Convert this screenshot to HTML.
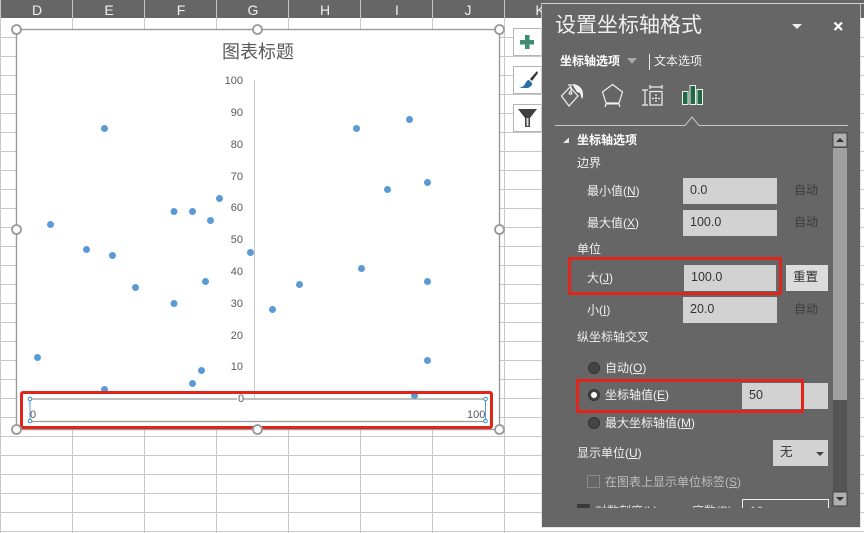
<!DOCTYPE html>
<html><head><meta charset="utf-8">
<style>
html,body{margin:0;padding:0;background:#fff}
#r{position:relative;width:864px;height:533px;overflow:hidden;font-family:"Liberation Sans","Noto Sans CJK SC",sans-serif;background:#fff}
svg{position:absolute;left:0;top:0}
.t{position:absolute;white-space:nowrap;font-size:12px;line-height:16px;color:#f0f0f0}
.u{text-decoration:underline}
.d{color:#bdbdbd}
.a{color:#3c3c3c}
.b{position:absolute;background:#d2d2d2;color:#333;font-size:12.500px;line-height:24px;box-sizing:border-box;padding-left:7px;height:26px}
.rd{position:absolute;width:12px;height:12px;border-radius:50%;background:#444;border:1px solid #333;box-sizing:border-box}
</style></head><body><div id="r">
<svg width="864" height="533" viewBox="0 0 864 533" font-family="Liberation Sans, Noto Sans CJK SC, sans-serif">
<g stroke="#c8c8c8" stroke-width="1" shape-rendering="crispEdges">
<path d="M0 37.500H864M0 56.500H864M0 75.500H864M0 94.500H864M0 113.500H864M0 132.500H864M0 151.500H864M0 170.500H864M0 189.500H864M0 208.500H864M0 227.500H864M0 246.500H864M0 265.500H864M0 284.500H864M0 303.500H864M0 322.500H864M0 341.500H864M0 360.500H864M0 379.500H864M0 398.500H864M0 417.500H864M0 436.500H864M0 455.500H864M0 474.500H864M0 493.500H864M0 512.500H864M0 531.500H864"/>
<path d="M0.500 18V533M72.500 18V533M144.500 18V533M216.500 18V533M288.500 18V533M360.500 18V533M432.500 18V533M504.500 18V533"/>
</g>
<rect x="0" y="0" width="864" height="18" fill="#666"/>
<g stroke="#c4c4c4" shape-rendering="crispEdges"><path d="M0.500 0V18M72.500 0V18M144.500 0V18M216.500 0V18M288.500 0V18M360.500 0V18M432.500 0V18M504.500 0V18"/></g>
<g fill="#f0f0f0" font-size="14" text-anchor="middle"><text x="37" y="15">D</text><text x="109" y="15">E</text><text x="181" y="15">F</text><text x="253" y="15">G</text><text x="325" y="15">H</text><text x="397" y="15">I</text><text x="468" y="15">J</text><text x="540" y="15">K</text></g>
<rect x="16.500" y="29.500" width="483" height="400" fill="#fff" stroke="#9a9a9a" stroke-width="1.400"/>
<text x="258" y="58" text-anchor="middle" font-size="18" fill="#595959">图表标题</text>
<path d="M254.500 80V399" stroke="#c8c8c8" fill="none"/>
<g fill="#595959" font-size="11" text-anchor="end">
<text x="243" y="84">100</text><text x="243" y="116">90</text><text x="243" y="148">80</text><text x="243" y="180">70</text><text x="243" y="211">60</text><text x="243" y="243">50</text><text x="243" y="275">40</text><text x="243" y="307">30</text><text x="243" y="339">20</text><text x="243" y="370">10</text>
</g>
<g fill="#5b9bd5">
<circle cx="104.500" cy="128.500" r="3.500"/><circle cx="50.500" cy="224.500" r="3.500"/><circle cx="86.500" cy="249.500" r="3.500"/><circle cx="112.500" cy="255.500" r="3.500"/><circle cx="135.500" cy="287.500" r="3.500"/><circle cx="174" cy="303.500" r="3.500"/><circle cx="174" cy="211.500" r="3.500"/><circle cx="192.500" cy="211.500" r="3.500"/><circle cx="210.500" cy="220.500" r="3.500"/><circle cx="219.500" cy="198.500" r="3.500"/><circle cx="250.500" cy="252.500" r="3.500"/><circle cx="205.500" cy="281.500" r="3.500"/><circle cx="37.500" cy="357.500" r="3.500"/><circle cx="201.500" cy="370.500" r="3.500"/><circle cx="192.500" cy="383.500" r="3.500"/><circle cx="104.500" cy="389.500" r="3.500"/><circle cx="272.500" cy="309.500" r="3.500"/><circle cx="299.500" cy="284.500" r="3.500"/><circle cx="356.500" cy="128.500" r="3.500"/><circle cx="409.500" cy="119.500" r="3.500"/><circle cx="387.500" cy="189.500" r="3.500"/><circle cx="427.500" cy="182.500" r="3.500"/><circle cx="361.500" cy="268.500" r="3.500"/><circle cx="427.500" cy="281.500" r="3.500"/><circle cx="427.500" cy="360.500" r="3.500"/><circle cx="414.500" cy="395.500" r="3.500"/>
</g>
<path d="M30 399H237M244 399H486M30 421.500H486" stroke="#9a9a9a" stroke-width="1.200" fill="none"/>
<path d="M30 399V421M485.500 399V421" stroke="#5b9bd5" fill="none"/>
<text x="238" y="402" font-size="11" fill="#595959">0</text>
<text x="30" y="418" font-size="11" fill="#595959">0</text>
<text x="467" y="418" font-size="11" fill="#595959">100</text>
<g fill="#fff" stroke="#2e8fd0" stroke-width="1"><circle cx="30" cy="399" r="1.800"/><circle cx="30" cy="421" r="1.800"/><circle cx="485.500" cy="399" r="1.800"/><circle cx="485.500" cy="421" r="1.800"/></g>
<rect x="21.500" y="392.500" width="470" height="35" rx="1.500" fill="none" stroke="#e1251b" stroke-width="3"/>
<g fill="#fff" stroke="#999" stroke-width="1.800"><circle cx="16.500" cy="29.500" r="4.500"/><circle cx="257.500" cy="29.500" r="4.500"/><circle cx="499.500" cy="29.500" r="4.500"/><circle cx="16.500" cy="229.500" r="4.500"/><circle cx="499.500" cy="229.500" r="4.500"/><circle cx="16.500" cy="429.500" r="4.500"/><circle cx="257.500" cy="429.500" r="4.500"/><circle cx="499.500" cy="429.500" r="4.500"/></g>
<g fill="#fff" stroke="#b4b4b4"><rect x="513.500" y="28.500" width="28" height="27"/><rect x="513.500" y="66.500" width="28" height="27"/><rect x="513.500" y="104.500" width="28" height="27"/></g>
<path d="M525 35h4.500v5h4.500v4.500h-4.500v4.500h-4.500v-4.500h-5v-4.500h5z" fill="#3f8b74"/>
<path d="M537 71L530 79l2 2 6-8z" fill="#333"/><path d="M529 80c-2 0-3 2-4 4-1 2-3 3-6 4h9c2-1 5-3 4-5z" fill="#2e6ea6"/>
<path d="M518 109H537L530 118V127H525V118Z" fill="#404040"/><path d="M526.500 118H528.500V126H526.500Z" fill="#ddd"/>
<rect x="542" y="3" width="318" height="524" fill="#666"/>
<path d="M541.500 3V527.500H860.500V3" stroke="#dcdcdc" stroke-width="1" fill="none" opacity=".7"/>
<path d="M541.500 3.500H864" stroke="#d0d0d0" fill="none"/>
<path d="M792 24h10l-5 5z" fill="#f0f0f0"/>
<path d="M834.500 22.500l7.500 7.500M842 22.500l-7.500 7.500" stroke="#fff" stroke-width="2.200" fill="none"/>
<path d="M627 58h10l-5 6z" fill="#a8a8a8"/>
<path d="M649.500 54V70" stroke="#e8e8e8" fill="none"/>
<g fill="none" stroke="#f0f0f0" stroke-width="1.200">
<path d="M561.500 96L570 87L578 96L569 106Z"/><path d="M568 85h3v7"/><circle cx="570.500" cy="93" r="1.300"/>
<path d="M572 84c6 0 11 4 11 10 0 2 0 4-1 5l-2-6-3-1z" fill="#f0f0f0" stroke="none"/>
<path d="M612.500 84.500L622.500 92L619 103H606L602.500 92Z"/><path d="M606 103.500H619" stroke-width="2"/><path d="M606 104l-1 3M619 104l1 3"/>
<path d="M650 87H662M650 85V89M662 85V89M642 90H648M642 105H648M645 90V105M650 91.500H662V105H650Z"/>
<path d="M656 94V103M652 98.500H660" stroke-dasharray="2 1"/>
</g>
<g fill="#1e6b43" stroke="#f0f0f0" stroke-width="1"><rect x="682.500" y="91.500" width="5.500" height="13"/><rect x="690" y="85.500" width="5.500" height="19"/><rect x="697" y="89.500" width="5.500" height="15"/></g>
<path d="M555 125.500H685L692 117L699 125.500H848" stroke="#c8c8c8" stroke-width="1" fill="none"/>
<path d="M563 143L569 137.500V143Z" fill="#e8e8e8"/>
<rect x="833" y="133" width="14" height="373" fill="#555"/>
<rect x="833" y="148" width="14" height="252" fill="#a0a0a0"/>
<rect x="833" y="133" width="14" height="14" fill="#b0b0b0" stroke="#444"/><path d="M836 142h8l-4-4z" fill="#333"/>
<rect x="833" y="492" width="14" height="14" fill="#b0b0b0" stroke="#444"/><path d="M836 497h8l-4 4z" fill="#333"/>
</svg>
<div class="t" style="left:555px;top:12px;font-size:21px;line-height:28px">设置坐标轴格式</div>
<div class="t" style="left:560px;top:53px;font-weight:bold;color:#fff">坐标轴选项</div>
<div class="t" style="left:654px;top:53px">文本选项</div>
<div class="t" style="left:577px;top:132px;font-weight:bold;color:#fff">坐标轴选项</div>
<div class="t" style="left:577px;top:155px">边界</div>
<div class="t" style="left:587px;top:183px">最小值(<span class="u">N</span>)</div>
<div class="b" style="left:683px;top:178px;width:94px">0.0</div>
<div class="t a" style="left:794px;top:182px">自动</div>
<div class="t" style="left:587px;top:215px">最大值(<span class="u">X</span>)</div>
<div class="b" style="left:683px;top:210px;width:94px">100.0</div>
<div class="t a" style="left:794px;top:214px">自动</div>
<div class="t" style="left:577px;top:241px">单位</div>
<div class="t" style="left:587px;top:270px">大(<span class="u">J</span>)</div>
<div class="b" style="left:684px;top:265px;width:92px">100.0</div>
<div class="b" style="left:786px;top:265px;width:42px;background:#dcdcdc;padding-left:7px">重置</div>
<div style="position:absolute;left:568px;top:257px;width:214px;height:38px;box-sizing:border-box;border:3px solid #e1251b;border-radius:2px"></div>
<div class="t" style="left:587px;top:302px">小(<span class="u">I</span>)</div>
<div class="b" style="left:683px;top:297px;width:94px">20.0</div>
<div class="t a" style="left:794px;top:301px">自动</div>
<div class="t" style="left:577px;top:329px">纵坐标轴交叉</div>
<div class="rd" style="left:588px;top:362px"></div>
<div class="t" style="left:605px;top:360px">自动(<span class="u">O</span>)</div>
<div class="rd" style="left:588px;top:389px"></div>
<div style="position:absolute;left:591px;top:392px;width:6px;height:6px;border-radius:50%;background:#fff"></div>
<div class="t" style="left:605px;top:387px">坐标轴值(<span class="u">E</span>)</div>
<div class="b" style="left:742px;top:383px;width:86px;padding-left:7px">50</div>
<div style="position:absolute;left:576px;top:379px;width:228px;height:34px;box-sizing:border-box;border:3px solid #e1251b;border-radius:1px"></div>
<div class="rd" style="left:588px;top:417px"></div>
<div class="t" style="left:605px;top:415px">最大坐标轴值(<span class="u">M</span>)</div>
<div class="t" style="left:577px;top:445px">显示单位(<span class="u">U</span>)</div>
<div class="b" style="left:773px;top:440px;width:55px;padding-left:7px">无</div>
<svg style="left:0;top:0" width="864" height="533"><path d="M816 452h8l-4 4z" fill="#444"/>
<rect x="587.500" y="475.500" width="12" height="12" fill="none" stroke="#8a8a8a"/>
<rect x="577" y="504" width="13" height="4" fill="#3a3a3a"/>
<path d="M742.500 508V499.500H828.500V508" fill="none" stroke="#eee"/></svg>
<div class="t d" style="left:605px;top:474px">在图表上显示单位标签(<span class="u">S</span>)</div>
<div style="position:absolute;left:595px;top:503px;height:5px;overflow:hidden;width:230px"><div class="t" style="position:absolute;left:0;top:0;color:#ddd">对数刻度(L)</div><div class="t" style="position:absolute;left:97px;top:0;color:#ddd">底数(B)</div><div class="t" style="position:absolute;left:155px;top:0;color:#ccc">10</div></div>
</div></body></html>
